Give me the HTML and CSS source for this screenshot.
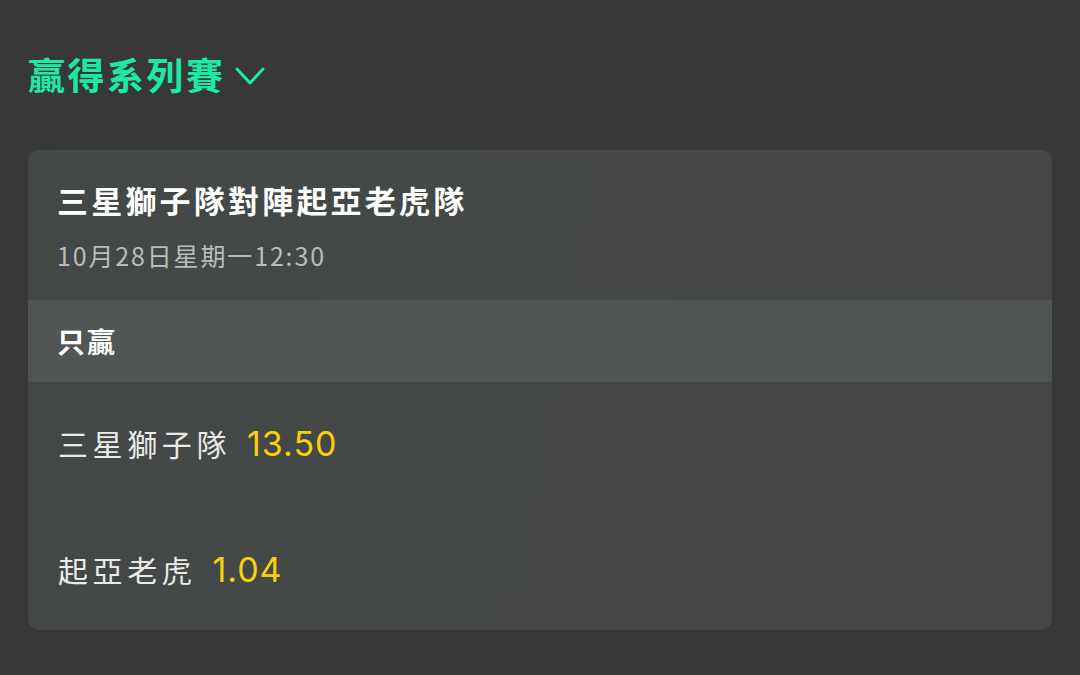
FILE: index.html
```html
<!DOCTYPE html>
<html lang="zh-Hant">
<head>
<meta charset="utf-8">
<link rel="stylesheet" href="styles.css">
</head>
<body>
<div class="page">
  <h1 class="market">贏得系列賽
    <svg class="chev" width="30" height="20" viewBox="0 0 30 20"><path d="M2 3 L15 17 L28 3" fill="none" stroke="#1de9a6" stroke-width="3" stroke-linecap="round" stroke-linejoin="round"/></svg>
  </h1>
  <div class="card">
    <div class="card-head">
      <div class="match">三星獅子隊對陣起亞老虎隊</div>
      <div class="date">10月28日星期一12:30</div>
    </div>
    <div class="band">只贏</div>
    <div class="rows">
      <div class="row"><span class="team">三星獅子隊</span><span class="odds">13.50</span></div>
      <div class="row"><span class="team">起亞老虎</span><span class="odds">1.04</span></div>
    </div>
  </div>
</div>
</body>
</html>
```

FILE: styles.css
```css
html, body {
  margin: 0;
  padding: 0;
  background: #383838;
}
body {
  width: 1080px;
  height: 675px;
  overflow: hidden;
  font-family: "Noto Sans CJK TC", "Noto Sans", sans-serif;
}
.page {
  padding: 48px 28px 0 28px;
}
.market {
  margin: 0;
  display: flex;
  align-items: center;
  gap: 9px;
  font-size: 37px;
  font-weight: 700;
  line-height: 52px;
  color: #1de9a6;
  letter-spacing: 2.5px;
}
.chev {
  display: block;
  margin-top: 4px;
}
.card {
  margin-top: 50px;
  width: 1024px;
  height: 480px;
  border-radius: 12px;
  overflow: hidden;
  background: linear-gradient(100deg, #434846 0%, #454847 60%, #464646 100%);
  display: flex;
  flex-direction: column;
}
.card-head {
  height: 150px;
  padding: 0 29px;
  box-sizing: border-box;
  padding-top: 26px;
}
.match {
  font-size: 31px;
  font-weight: 700;
  color: #ffffff;
  line-height: 48px;
  letter-spacing: 3.2px;
}
.date {
  margin-top: 14px;
  font-size: 25px;
  color: #b9bcbb;
  line-height: 34px;
  letter-spacing: 1.85px;
}
.band {
  height: 82px;
  background: #515554;
  padding: 0 29px;
  display: flex;
  align-items: center;
  font-size: 28px;
  font-weight: 700;
  color: #ffffff;
  letter-spacing: 2px;
}
.rows {
  display: flex;
  flex-direction: column;
  padding: 0 30px;
  padding-top: 36px;
  gap: 76px;
}
.row {
  display: flex;
  align-items: center;
  gap: 16px;
  height: 50px;
}
.team {
  font-size: 30px;
  color: #eaeaea;
  letter-spacing: 4.6px;
}
.odds {
  font-family: "Inter", "Noto Sans", sans-serif;
  font-size: 34px;
  color: #f6d10b;
  letter-spacing: 1px;
}
```
